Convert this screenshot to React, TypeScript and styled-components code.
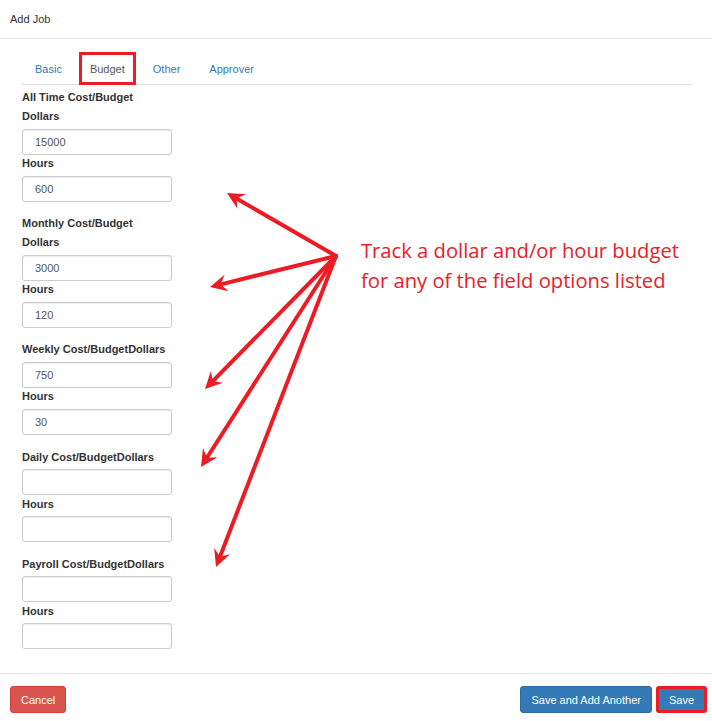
import styled, { createGlobalStyle } from 'styled-components';

const GlobalStyle = createGlobalStyle`
  html, body {
    margin: 0;
    padding: 0;
    background: #fff;
  }
  body {
    font-family: "Liberation Sans", Arial, sans-serif;
    font-size: 11px;
    color: #333;
  }
  * { box-sizing: border-box; }
`;

const Modal = styled.div`
  position: relative;
  width: 712px;
  height: 721px;
  background: #fff;
  display: flex;
  flex-direction: column;
`;

const Header = styled.div`
  height: 39px;
  padding: 0 10px 1px;
  display: flex;
  align-items: center;
  border-bottom: 1px solid #e5e5e5;
  color: #333;
  font-size: 11px;
`;

const Body = styled.div`
  padding: 13px 20px 0 22px;
  flex: 1;
`;

const Tabs = styled.ul`
  list-style: none;
  margin: 0;
  padding: 0;
  display: flex;
  align-items: flex-start;
  border-bottom: 1px solid #ddd;
`;

const Tab = styled.li<{ $active?: boolean }>`
  margin-right: ${p => (p.$active ? '4px' : '3px')};
  margin-left: ${p => (p.$active ? '1px' : '0')};
  height: ${p => (p.$active ? '33px' : '32px')};
  display: flex;
  align-items: center;
  padding: ${p => (p.$active ? '0 8px' : '1px 13px 0')};
  border: ${p => (p.$active ? '3px solid #ed1c24' : 'none')};
  color: ${p => (p.$active ? '#555' : '#337ab7')};
  font-size: 11px;
  margin-bottom: ${p => (p.$active ? '-1px' : '0')};
  background: ${p => (p.$active ? '#fff' : 'transparent')};
`;

const Section = styled.div<{ $first?: boolean }>`
  display: flex;
  flex-direction: column;
  margin-top: ${p => (p.$first ? '5px' : '14.5px')};
`;

const Label = styled.div<{ $gap?: number; $after?: number }>`
  font-weight: bold;
  font-size: 11px;
  line-height: 14px;
  color: #333;
  margin-top: ${p => p.$gap ?? 0}px;
  margin-bottom: ${p => p.$after ?? 5.6}px;
`;

const Input = styled.input`
  width: 150px;
  height: 26px;
  border: 1px solid #ccc;
  border-radius: 3px;
  padding: 0 12px;
  font-family: "Liberation Sans", Arial, sans-serif;
  font-size: 11px;
  color: #555;
  box-shadow: inset 0 1px 1px rgba(0, 0, 0, 0.075);
  outline: none;
`;

const Footer = styled.div`
  height: 48px;
  border-top: 1px solid #e5e5e5;
  padding: 12px 5px 0 10px;
  display: flex;
  align-items: flex-start;
`;

const Spacer = styled.div`
  flex: 1;
`;

const Button = styled.button<{ $variant: 'danger' | 'primary'; $marked?: boolean }>`
  height: 27px;
  padding: 0 10px;
  border-radius: 3px;
  border: ${p => (p.$marked ? '3px solid #ed1c24' : '1px solid transparent')};
  background: ${p => (p.$variant === 'danger' ? '#d9534f' : '#337ab7')};
  border-color: ${p =>
    p.$marked ? '#ed1c24' : p.$variant === 'danger' ? '#d43f3a' : '#2e6da4'};
  color: #fff;
  font-family: "Liberation Sans", Arial, sans-serif;
  font-size: 11px;
  font-weight: normal;
  margin-left: ${p => (p.$marked ? '4px' : '0')};
  cursor: pointer;
`;

const Callout = styled.div`
  position: absolute;
  left: 361px;
  top: 235px;
  font-family: "Open Sans", "Noto Sans", sans-serif;
  font-size: 20.2px;
  line-height: 30px;
  color: #e8202a;
  pointer-events: none;
`;

const Overlay = styled.svg`
  position: absolute;
  left: 0;
  top: 0;
  pointer-events: none;
`;

const origin = { x: 336, y: 256 };
const tips = [
  { x: 227, y: 193 },
  { x: 210, y: 287 },
  { x: 205, y: 389 },
  { x: 201, y: 467 },
  { x: 216, y: 567 },
];

function Arrow({ tx, ty }: { tx: number; ty: number }) {
  const dx = tx - origin.x;
  const dy = ty - origin.y;
  const len = Math.hypot(dx, dy);
  const ux = dx / len;
  const uy = dy / len;
  const nx = -uy;
  const ny = ux;
  const back = 17;
  const wide = 8.5;
  const notch = 11;
  const bx = tx - ux * back;
  const by = ty - uy * back;
  const pts = [
    [tx, ty],
    [bx + nx * wide, by + ny * wide],
    [tx - ux * notch, ty - uy * notch],
    [bx - nx * wide, by - ny * wide],
  ]
    .map(p => p.join(','))
    .join(' ');
  return (
    <g>
      <line
        x1={origin.x}
        y1={origin.y}
        x2={tx - ux * 8}
        y2={ty - uy * 8}
        stroke="#ed1c24"
        strokeWidth={4}
        strokeLinecap="round"
      />
      <polygon points={pts} fill="#ed1c24" />
    </g>
  );
}

const sections = [
  { title: 'All Time Cost/Budget', split: true, dollars: '15000', hours: '600' },
  { title: 'Monthly Cost/Budget', split: true, dollars: '3000', hours: '120' },
  { title: 'Weekly Cost/BudgetDollars', split: false, dollars: '750', hours: '30' },
  { title: 'Daily Cost/BudgetDollars', split: false, dollars: '', hours: '' },
  { title: 'Payroll Cost/BudgetDollars', split: false, dollars: '', hours: '' },
];

export default function App() {
  return (
    <>
      <GlobalStyle />
      <Modal>
        <Header>Add Job</Header>
        <Body>
          <Tabs>
            <Tab>Basic</Tab>
            <Tab $active>Budget</Tab>
            <Tab>Other</Tab>
            <Tab>Approver</Tab>
          </Tabs>
          {sections.map((s, i) => (
            <Section key={s.title} $first={i === 0}>
              <Label $after={s.split ? 5 : 5.6}>{s.title}</Label>
              {s.split && <Label>Dollars</Label>}
              <Input defaultValue={s.dollars} />
              <Label $gap={1.5}>Hours</Label>
              <Input defaultValue={s.hours} />
            </Section>
          ))}
        </Body>
        <Footer>
          <Button $variant="danger">Cancel</Button>
          <Spacer />
          <Button $variant="primary">Save and Add Another</Button>
          <Button $variant="primary" $marked>
            Save
          </Button>
        </Footer>
        <Overlay width={712} height={721}>
          {tips.map(t => (
            <Arrow key={`${t.x}-${t.y}`} tx={t.x} ty={t.y} />
          ))}
        </Overlay>
        <Callout>
          Track a dollar and/or hour budget
          <br />
          for any of the field options listed
        </Callout>
      </Modal>
    </>
  );
}
